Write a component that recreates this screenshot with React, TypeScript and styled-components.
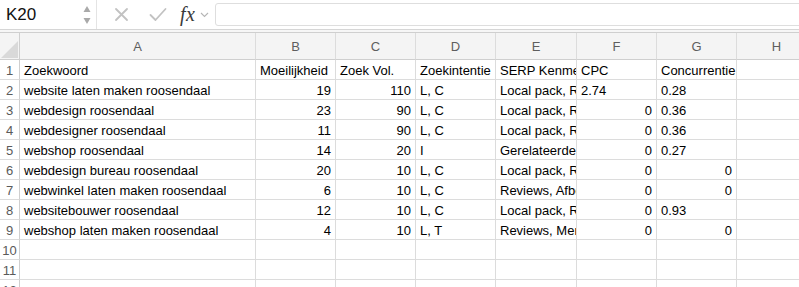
import { FunctionComponent } from "react";
import styled, { createGlobalStyle } from "styled-components";

const GlobalStyle = createGlobalStyle`
  html, body {
    margin: 0;
    padding: 0;
    background: #ffffff;
    overflow: hidden;
  }
  body {
    font-family: "Liberation Sans", Arial, sans-serif;
  }
`;

type Align = "left" | "right";

type CellData = { text: string; align?: Align };

const COLUMNS = ["A", "B", "C", "D", "E", "F", "G", "H"];
const COL_WIDTHS = [236, 80, 80, 80, 81, 80, 80, 80];

const r = (text: string): CellData => ({ text, align: "right" });
const l = (text: string): CellData => ({ text });

const ROWS: CellData[][] = [
  [l("Zoekwoord"), l("Moeilijkheid"), l("Zoek Vol."), l("Zoekintentie"), l("SERP Kenmerken"), l("CPC"), l("Concurrentie"), l("")],
  [l("website laten maken roosendaal"), r("19"), r("110"), l("L, C"), l("Local pack, Reviews"), l("2.74"), l("0.28"), l("")],
  [l("webdesign roosendaal"), r("23"), r("90"), l("L, C"), l("Local pack, Reviews"), r("0"), l("0.36"), l("")],
  [l("webdesigner roosendaal"), r("11"), r("90"), l("L, C"), l("Local pack, Reviews"), r("0"), l("0.36"), l("")],
  [l("webshop roosendaal"), r("14"), r("20"), l("I"), l("Gerelateerde vragen"), r("0"), l("0.27"), l("")],
  [l("webdesign bureau roosendaal"), r("20"), r("10"), l("L, C"), l("Local pack, Reviews"), r("0"), r("0"), l("")],
  [l("webwinkel laten maken roosendaal"), r("6"), r("10"), l("L, C"), l("Reviews, Afbeeldingen"), r("0"), r("0"), l("")],
  [l("websitebouwer roosendaal"), r("12"), r("10"), l("L, C"), l("Local pack, Reviews"), r("0"), l("0.93"), l("")],
  [l("webshop laten maken roosendaal"), r("4"), r("10"), l("L, T"), l("Reviews, Merken"), r("0"), r("0"), l("")],
  [l(""), l(""), l(""), l(""), l(""), l(""), l(""), l("")],
  [l(""), l(""), l(""), l(""), l(""), l(""), l(""), l("")],
  [l(""), l(""), l(""), l(""), l(""), l(""), l(""), l("")],
];

const Window = styled.div`
  width: 799px;
  height: 287px;
  overflow: hidden;
  background: #ffffff;
`;

const Toolbar = styled.div`
  display: flex;
  align-items: center;
  height: 30px;
  border-bottom: 1px solid #d6d6d6;
  box-sizing: border-box;
`;

const NameBox = styled.div`
  display: flex;
  align-items: center;
  justify-content: space-between;
  width: 97px;
  height: 29px;
  padding: 0 5px 0 6px;
  box-sizing: border-box;
  border-right: 1px solid #e4e4e4;
  font-size: 17px;
  color: #111;
`;

const ActionIcon = styled.svg`
  flex-shrink: 0;
  display: block;
`;

const Fx = styled.span`
  font-family: "Liberation Serif", "DejaVu Serif", serif;
  font-style: italic;
  font-size: 20px;
  color: #3a3a3a;
  margin-left: 13px;
  letter-spacing: 0.5px;
`;

const FormulaInput = styled.div`
  flex: 1;
  height: 23px;
  margin: 0 -4px 0 6px;
  border: 1px solid #dedede;
  border-radius: 3px;
  box-sizing: border-box;
`;

const Divider = styled.div`
  height: 2px;
  border-bottom: 1px solid #cfcfcf;
  background: #f6f6f6;
`;

const Sheet = styled.div`
  display: grid;
  grid-template-columns: 20px ${COL_WIDTHS.map((w) => `${w}px`).join(" ")};
  grid-template-rows: 27px;
  grid-auto-rows: 20px;
  font-size: 13px;
`;

const Corner = styled.div`
  position: relative;
  background: #f4f4f4;
  border-right: 1px solid #cfcfcf;
  border-bottom: 1px solid #cfcfcf;
  box-sizing: border-box;
`;

const CornerMark = styled.svg`
  position: absolute;
  right: 1px;
  bottom: 1px;
`;

const ColHeader = styled.div`
  display: flex;
  align-items: center;
  justify-content: center;
  background: #f4f4f4;
  color: #5e5e5e;
  font-size: 13px;
  border-right: 1px solid #dcdcdc;
  border-bottom: 1px solid #cfcfcf;
  box-sizing: border-box;
  padding-top: 1px;
`;

const RowHeader = styled.div`
  display: flex;
  align-items: center;
  justify-content: center;
  background: #ffffff;
  color: #5a5a5a;
  font-size: 13px;
  border-right: 1px solid #cfcfcf;
  border-bottom: 1px solid #dcdcdc;
  box-sizing: border-box;
  padding-top: 1px;
`;

const Cell = styled.div<{ $align?: Align }>`
  display: flex;
  align-items: center;
  justify-content: ${(p) => (p.$align === "right" ? "flex-end" : "flex-start")};
  padding: 1px 4px 0 4px;
  color: #000;
  white-space: nowrap;
  overflow: hidden;
  border-right: 1px solid #dcdcdc;
  border-bottom: 1px solid #dcdcdc;
  box-sizing: border-box;
`;

const NameStepper: FunctionComponent = () => (
  <ActionIcon width="8" height="22" viewBox="0 0 8 22">
    <path d="M4 2 L7.5 8 L0.5 8 Z" fill="#a9a9a9" />
    <path d="M0.5 14 L7.5 14 L4 20 Z" fill="#a9a9a9" />
  </ActionIcon>
);

const RowFragment: FunctionComponent<{ index: number; row: CellData[] }> = ({ index, row }) => (
  <>
    <RowHeader>{index}</RowHeader>
    {row.map((cell, j) => (
      <Cell key={j} $align={cell.align}>
        {cell.text}
      </Cell>
    ))}
  </>
);

const App: FunctionComponent = () => {
  return (
    <Window>
      <GlobalStyle />
      <Toolbar>
        <NameBox>
          <span>K20</span>
          <NameStepper />
        </NameBox>
        <ActionIcon width="15" height="15" viewBox="0 0 15 15" style={{ marginLeft: 17 }}>
          <path d="M2 2 L13 13 M13 2 L2 13" stroke="#c2c2c2" strokeWidth="1.8" strokeLinecap="round" />
        </ActionIcon>
        <ActionIcon width="18" height="15" viewBox="0 0 18 15" style={{ marginLeft: 20 }}>
          <path d="M1.5 8 L6.5 13 L16.5 2" stroke="#c2c2c2" strokeWidth="1.8" fill="none" strokeLinecap="round" strokeLinejoin="round" />
        </ActionIcon>
        <Fx>fx</Fx>
        <ActionIcon width="9" height="6" viewBox="0 0 9 6" style={{ marginLeft: 5 }}>
          <path d="M1 1 L4.5 4.5 L8 1" stroke="#b5b5b5" strokeWidth="1.1" fill="none" />
        </ActionIcon>
        <FormulaInput />
      </Toolbar>
      <Divider />
      <Sheet>
        <Corner>
          <CornerMark width="17" height="17" viewBox="0 0 17 17">
            <path d="M17 0 L17 17 L0 17 Z" fill="#d9d9d9" />
          </CornerMark>
        </Corner>
        {COLUMNS.map((c) => (
          <ColHeader key={c}>{c}</ColHeader>
        ))}
        {ROWS.map((row, i) => (
          <RowFragment key={i} index={i + 1} row={row} />
        ))}
      </Sheet>
    </Window>
  );
};

export default App;
